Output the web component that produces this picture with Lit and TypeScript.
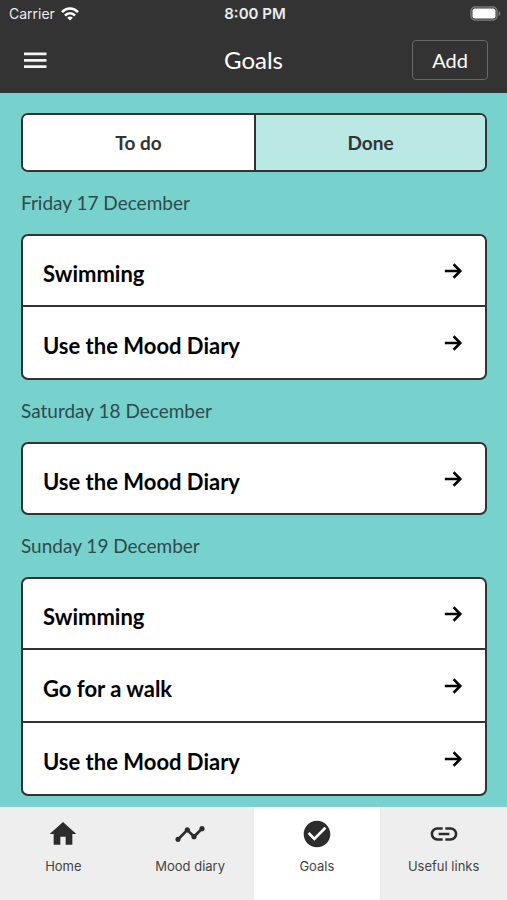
import { LitElement, html, css, svg, nothing } from "lit";
import { customElement, state } from "lit/decorators.js";
import { classMap } from "lit/directives/class-map.js";

interface Day {
  label: string;
  goals: string[];
}

const DAYS: Day[] = [
  { label: "Friday 17 December", goals: ["Swimming", "Use the Mood Diary"] },
  { label: "Saturday 18 December", goals: ["Use the Mood Diary"] },
  { label: "Sunday 19 December", goals: ["Swimming", "Go for a walk", "Use the Mood Diary"] },
];

const TABS = [
  { label: "Home", icon: "M10 20v-6h4v6h5v-8h3L12 3 2 12h3v8z" },
  {
    label: "Mood diary",
    icon: "M23 8c0 1.1-.9 2-2 2-.18 0-.35-.02-.51-.07l-3.56 3.55c.05.16.07.34.07.52 0 1.1-.9 2-2 2s-2-.9-2-2c0-.18.02-.36.07-.52l-2.55-2.55c-.16.05-.34.07-.52.07s-.36-.02-.52-.07l-4.55 4.56c.05.16.07.33.07.51 0 1.1-.9 2-2 2s-2-.9-2-2 .9-2 2-2c.18 0 .35.02.51.07l4.56-4.55C8.02 9.36 8 9.18 8 9c0-1.1.9-2 2-2s2 .9 2 2c0 .18-.02.36-.07.52l2.55 2.55c.16-.05.34-.07.52-.07s.36.02.52.07l3.55-3.56C19.02 8.35 19 8.18 19 8c0-1.1.9-2 2-2s2 .9 2 2z",
  },
  {
    label: "Goals",
    icon: "M12 2C6.48 2 2 6.48 2 12s4.48 10 10 10 10-4.48 10-10S17.52 2 12 2zm-2 15l-5-5 1.41-1.41L10 14.17l7.59-7.59L19 8l-9 9z",
  },
  {
    label: "Useful links",
    icon: "M3.9 12c0-1.71 1.39-3.1 3.1-3.1h4V7H7c-2.76 0-5 2.24-5 5s2.24 5 5 5h4v-1.9H7c-1.71 0-3.1-1.39-3.1-3.1zM8 13h8v-2H8v2zm9-6h-4v1.9h4c1.71 0 3.1 1.39 3.1 3.1s-1.39 3.1-3.1 3.1h-4V17h4c2.76 0 5-2.24 5-5s-2.24-5-5-5z",
  },
];

@customElement("status-bar")
export class StatusBar extends LitElement {
  static styles = css`
    :host {
      display: grid;
      grid-template-columns: 1fr auto 1fr;
      align-items: center;
      height: 27px;
      padding: 0 6px 0 9px;
      color: #ececec;
      font: 14px/20px Inter, "Liberation Sans", sans-serif;
    }
    .carrier {
      display: flex;
      align-items: center;
      gap: 6px;
    }
    .time {
      font-size: 15px;
      font-weight: 600;
    }
    .battery {
      justify-self: end;
    }
    svg {
      display: block;
    }
  `;

  render() {
    return html`
      <span class="carrier">
        Carrier
        <svg width="18" height="14" viewBox="0 0 18 14" fill="none" stroke="#fff" stroke-width="2.6" aria-hidden="true">
          <path d="M1 5.2C5.6 .3 12.4 .3 17 5.2" />
          <path d="M4 8.5C6.8 5.5 11.2 5.5 14 8.5" />
          <path d="M9 13.6 6.2 10.7Q9 8.3 11.8 10.7z" fill="#fff" stroke="none" />
        </svg>
      </span>
      <span class="time">8:00 PM</span>
      <svg class="battery" width="31" height="15" viewBox="0 0 31 15" aria-hidden="true">
        <rect x="1" y="1" width="26" height="13" rx="4" fill="#333" stroke="#777" stroke-width="1.5" />
        <rect x="2.5" y="2.5" width="23" height="10" rx="2" fill="#fff" />
        <path d="M28.5 5v5q2-.8 2-2.5t-2-2.5z" fill="#777" />
      </svg>
    `;
  }
}

@customElement("goal-day")
export class GoalDay extends LitElement {
  static properties = { day: { attribute: false } };
  declare day: Day;

  static styles = css`
    :host {
      display: block;
    }
    .date {
      margin: 0;
      height: 62px;
      display: flex;
      align-items: center;
      font-size: 19px;
      line-height: 24px;
      font-weight: 400;
      color: #2f4a4c;
    }
    .card {
      list-style: none;
      margin: 0;
      padding: 0;
      background: #fff;
      border: 2px solid #333;
      border-radius: 7px;
      overflow: hidden;
    }
    .item + .item {
      border-top: 2px solid #333;
    }
    .goal {
      display: flex;
      align-items: center;
      justify-content: space-between;
      min-height: 69px;
      padding: 0 20px;
      color: #000;
      text-decoration: none;
    }
    .item + .item .goal {
      min-height: 71px;
    }
    .title {
      padding-top: 6px;
      font-size: 22px;
      line-height: 28px;
      font-weight: 700;
    }
    .arrow {
      flex: none;
    }
  `;

  render() {
    return html`
      <h2 class="date">${this.day.label}</h2>
      <ul class="card">
        ${this.day.goals.map(
          (goal) => html`
            <li class="item">
              <a class="goal" href="#">
                <span class="title">${goal}</span>
                <svg class="arrow" width="24" height="24" viewBox="0 0 512 512" fill="none" stroke="#000" stroke-width="54" aria-hidden="true">
                  <path d="M268 112l144 144-144 144M402 256H82" />
                </svg>
              </a>
            </li>
          `,
        )}
      </ul>
    `;
  }
}

@customElement("app-root")
export class AppRoot extends LitElement {
  @state() private segment = "To do";
  @state() private tab = "Goals";

  static styles = css`
    :host {
      display: flex;
      flex-direction: column;
      min-height: 100vh;
      background: #77d1cc;
      font-family: Lato, "Liberation Sans", sans-serif;
    }
    button {
      font: inherit;
      margin: 0;
      cursor: pointer;
    }
    .header {
      background: #333;
      color: #fff;
    }
    .toolbar {
      display: grid;
      grid-template-columns: 1fr auto 1fr;
      align-items: center;
      min-height: 66px;
      padding: 0 19px;
      box-sizing: border-box;
    }
    .menu {
      justify-self: start;
      display: flex;
      padding: 5px;
      border: 0;
      background: none;
    }
    .heading {
      margin: 0;
      font-size: 24px;
      line-height: 32px;
      font-weight: 400;
    }
    .add {
      justify-self: end;
      padding: 5px 19px;
      border: 1px solid #6a6a6a;
      border-radius: 4px;
      background: none;
      color: #fff;
      font-size: 20px;
      line-height: 28px;
    }
    .content {
      flex: 1;
      padding: 20px 20px 11px 21px;
    }
    .segments {
      display: grid;
      grid-template-columns: 1fr 1fr;
      border: 2px solid #333;
      border-radius: 7px;
      overflow: hidden;
      background: #fff;
    }
    .segment {
      padding: 0;
      height: 55px;
      border: 0;
      background: #bae9e5;
      color: #333;
      font-size: 19px;
      font-weight: 700;
    }
    .segment + .segment {
      border-left: 2px solid #333;
    }
    .segment.selected {
      background: #fff;
    }
    .tabs {
      position: sticky;
      bottom: 0;
      display: grid;
      grid-template-columns: repeat(4, 1fr);
      background: #eee;
      font-family: Inter, "Liberation Sans", sans-serif;
    }
    .tab {
      display: flex;
      flex-direction: column;
      align-items: center;
      gap: 6px;
      padding: 11px 0 24px;
      color: #444;
      text-decoration: none;
      font-size: 13px;
      line-height: 20px;
    }
    .tab.selected {
      background: #fff;
    }
  `;

  render() {
    return html`
      <header class="header">
        <status-bar></status-bar>
        <div class="toolbar">
          <button class="menu" aria-label="Menu">
            <svg width="23" height="17" viewBox="0 0 23 17" fill="#f4f4f4" aria-hidden="true">
              <path d="M0 .5h22.5v2.7H0zM0 7h22.5v2.7H0zM0 13.3h22.5v2.7H0z" />
            </svg>
          </button>
          <h1 class="heading">Goals</h1>
          <button class="add">Add</button>
        </div>
      </header>
      <main class="content">
        <div class="segments">
          ${["To do", "Done"].map(
            (name) => html`
              <button
                class=${classMap({ segment: true, selected: this.segment === name })}
                aria-pressed=${this.segment === name}
                @click=${() => (this.segment = name)}
              >${name}</button>
            `,
          )}
        </div>
        ${DAYS.map((day) => html`<goal-day .day=${day}></goal-day>`)}
      </main>
      <nav class="tabs">
        ${TABS.map(
          (tab) => html`
            <a
              class=${classMap({ tab: true, selected: this.tab === tab.label })}
              href="#"
              aria-current=${this.tab === tab.label ? "page" : nothing}
              @click=${() => (this.tab = tab.label)}
            >
              <svg width="32" height="32" viewBox="0 0 24 24" fill="#2c2c2c" aria-hidden="true">
                ${svg`<path d=${tab.icon} />`}
              </svg>
              ${tab.label}
            </a>
          `,
        )}
      </nav>
    `;
  }
}
